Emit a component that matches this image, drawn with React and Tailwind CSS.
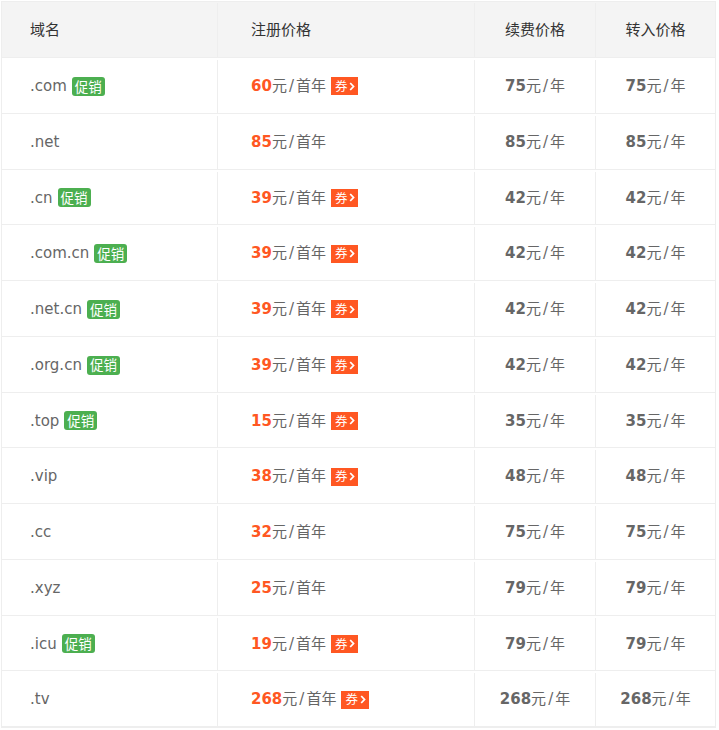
import React from "react";

const rows = [
  { d: ".com", promo: true, reg: "60", coupon: true, renew: "75", transfer: "75" },
  { d: ".net", promo: false, reg: "85", coupon: false, renew: "85", transfer: "85" },
  { d: ".cn", promo: true, reg: "39", coupon: true, renew: "42", transfer: "42" },
  { d: ".com.cn", promo: true, reg: "39", coupon: true, renew: "42", transfer: "42" },
  { d: ".net.cn", promo: true, reg: "39", coupon: true, renew: "42", transfer: "42" },
  { d: ".org.cn", promo: true, reg: "39", coupon: true, renew: "42", transfer: "42" },
  { d: ".top", promo: true, reg: "15", coupon: true, renew: "35", transfer: "35" },
  { d: ".vip", promo: false, reg: "38", coupon: true, renew: "48", transfer: "48" },
  { d: ".cc", promo: false, reg: "32", coupon: false, renew: "75", transfer: "75" },
  { d: ".xyz", promo: false, reg: "25", coupon: false, renew: "79", transfer: "79" },
  { d: ".icu", promo: true, reg: "19", coupon: true, renew: "79", transfer: "79" },
  { d: ".tv", promo: false, reg: "268", coupon: true, renew: "268", transfer: "268" },
];

const font = { fontFamily: '"DejaVu Sans", "Noto Sans CJK SC", sans-serif' };
const cjk = { fontFamily: '"Noto Sans CJK SC", sans-serif' };

function Promo() {
  return (
    <span className="ml-[5px] inline-flex h-[19px] items-center rounded-[3px] bg-[#4caf50] px-[3px] text-[13.5px] leading-none text-white" style={cjk}>
      促销
    </span>
  );
}

function Coupon() {
  return (
    <span className="ml-[5px] inline-flex h-[18px] items-center bg-[#ff5722] pl-[4px] pr-[3px] text-[12.5px] leading-none text-white" style={cjk}>
      券
      <svg width="6" height="9" viewBox="0 0 6 9" className="ml-[2px]">
        <path d="M1.2 1 L4.5 4.5 L1.2 8" fill="none" stroke="white" strokeWidth="1.8" />
      </svg>
    </span>
  );
}

export default function App() {
  return (
    <div className="bg-white pl-px pt-px" style={font}>
      <div className="w-[715px] border border-[#eeeeee]">
        <div className="grid h-[56px] grid-cols-[216px_257px_121px_1fr] border-b border-[#eeeeee] bg-[#f4f4f4] pt-px text-[15px] text-[#333]">
          <div className="flex items-center border-r border-[#eeeeee] pl-[28px]">域名</div>
          <div className="flex items-center border-r border-[#eeeeee] pl-[33px]">注册价格</div>
          <div className="flex items-center justify-center border-r border-[#eeeeee]">续费价格</div>
          <div className="flex items-center justify-center">转入价格</div>
        </div>
        {rows.map((r) => (
          <div
            key={r.d}
            className="grid h-[55.75px] grid-cols-[216px_257px_121px_1fr] border-b border-[#eeeeee] pt-[2px] text-[15px] text-[#666]"
          >
            <div className="flex items-center border-r border-[#eeeeee] pl-[28px]">
              <span>{r.d}</span>
              {r.promo && <Promo />}
            </div>
            <div className="flex items-center border-r border-[#eeeeee] pl-[33px]">
              <span className="font-bold text-[#ff5722]">{r.reg}</span>
              <span>元<span className="mx-[2px]">/</span>首年</span>
              {r.coupon && <Coupon />}
            </div>
            <div className="flex items-center justify-center border-r border-[#eeeeee]">
              <span className="font-bold">{r.renew}</span>
              <span>元<span className="mx-[2px]">/</span>年</span>
            </div>
            <div className="flex items-center justify-center">
              <span className="font-bold">{r.transfer}</span>
              <span>元<span className="mx-[2px]">/</span>年</span>
            </div>
          </div>
        ))}
      </div>
    </div>
  );
}
